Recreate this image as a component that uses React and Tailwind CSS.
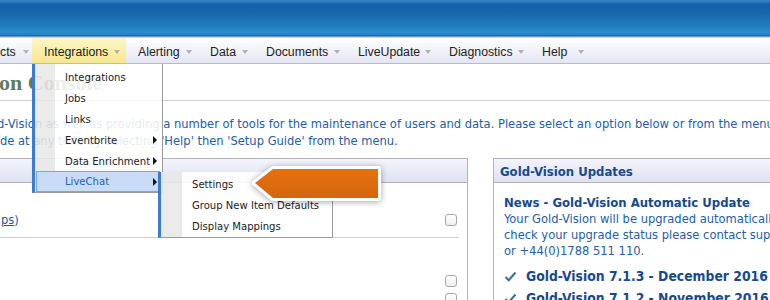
import React from 'react';

const navItems = [
  { label: 'Integrations', w: 'w-[94px]', active: true },
  { label: 'Alerting', w: 'w-[72px]' },
  { label: 'Data', w: 'w-[56px]' },
  { label: 'Documents', w: 'w-[92px]' },
  { label: 'LiveUpdate', w: 'w-[91px]' },
  { label: 'Diagnostics', w: 'w-[93px]' },
  { label: 'Help', w: 'w-[60px]' },
];

const menuItems = [
  { label: 'Integrations' },
  { label: 'Jobs' },
  { label: 'Links' },
  { label: 'Eventbrite', sub: true },
  { label: 'Data Enrichment', sub: true },
];

const DownArrow = () => (
  <svg width="6" height="4" viewBox="0 0 6 4" className="shrink-0">
    <path d="M0 0h6L3 4z" fill="#b0b0b8" />
  </svg>
);

const SubArrow = () => (
  <svg width="4" height="8" viewBox="0 0 4 8" className="shrink-0">
    <path d="M0 0l4 4-4 4z" fill="#111" />
  </svg>
);

const Check = () => (
  <svg width="13" height="11" viewBox="0 0 13 11" className="shrink-0">
    <path d="M1.5 6l3.2 3.2L11.5 1.5" fill="none" stroke="#2f6fa6" strokeWidth="2" />
  </svg>
);

const Checkbox = () => (
  <span className="block w-[12px] h-[12px] rounded-[3px] border border-[#a8a8a8] bg-gradient-to-b from-white to-[#eee]" />
);

export default function App() {
  return (
    <div className="relative w-[770px] h-[300px] overflow-hidden bg-white font-['DejaVu_Sans_Condensed','DejaVu_Sans',sans-serif]">
      {/* Top bar */}
      <div className="h-[38px] bg-[linear-gradient(to_bottom,#3d86c6_0px,#2d78bb_2px,#1461a6_4px,#1566aa_12px,#1f7dbe_26px,#2a8ccd_32px,#2580c2_35px,#0f5a98_36px,#cfd3dc_37px)]" />

      {/* Nav */}
      <nav className="h-[26px] flex bg-gradient-to-b from-white to-[#e4e5f3] border-b border-[#b9bac8] font-['Liberation_Sans',Arial,sans-serif] text-[12.3px] text-[#222]">
        <div className="w-[32px] flex items-center pr-[3px] pt-[3px]">
          <span>cts</span>
          <span className="ml-auto"><DownArrow /></span>
        </div>
        {navItems.map((n) => (
          <div
            key={n.label}
            className={`${n.w} shrink-0 flex items-center pt-[3px] pl-[12px] pr-[6px] ${n.active ? 'bg-gradient-to-b from-[#fdf7c8] to-[#f7e68a]' : ''}`}
          >
            <span>{n.label}</span>
            <span className="ml-auto"><DownArrow /></span>
          </div>
        ))}
      </nav>

      {/* Content */}
      <main>
        <div className="h-[37px] flex items-center pt-[1px] border-b border-[#cfcfcf]">
          <h1 className="-ml-[1px] font-['Liberation_Serif',serif] font-bold text-[22px] text-[#5d7d61] whitespace-nowrap">
            on Console
          </h1>
        </div>
        <div className="mt-[14px] text-[12.8px] leading-[17px] text-[#2160a8] whitespace-nowrap -ml-[3px]">
          <p>d-Vision as well as providing a number of tools for the maintenance of users and data. Please select an option below or from the menu</p>
          <p className="ml-[3px]">de at any time by selecting 'Help' then 'Setup Guide' from the menu.</p>
        </div>

        <div className="mt-[9px] flex gap-[25px]">
          {/* Left panel */}
          <section className="w-[470px] shrink-0 -ml-[2px] border border-[#b3b3b3] h-[160px]">
            <div className="h-[24px] bg-gradient-to-b from-[#f3f4fb] to-[#dfe1f2] border-b border-[#b3b3b3]" />
            <div className="mr-[8px] h-[55px] flex items-center justify-between pt-[19px] border-b border-[#cfcfcf] pl-[2px] text-[12.8px] text-[#1f5aa3]">
              <span><span className="underline">ps</span>)</span>
              <span className="mr-[2px]"><Checkbox /></span>
            </div>
            <div className="mr-[10px] flex flex-col items-end gap-[6px] pt-[37px]">
              <Checkbox />
              <Checkbox />
            </div>
          </section>

          {/* Right panel */}
          <section className="w-[300px] shrink-0 border border-[#b3b3b3] h-[160px]">
            <div className="h-[24px] flex items-center pt-[3px] pl-[6px] bg-gradient-to-b from-[#f3f4fb] to-[#dfe1f2] border-b border-[#b3b3b3] text-[13px] font-bold text-[#174a8c]">
              Gold-Vision Updates
            </div>
            <div className="pl-[10px] pt-[11px] whitespace-nowrap">
              <h2 className="text-[13px] leading-[17px] font-bold text-[#174a8c]">News - Gold-Vision Automatic Update</h2>
              <p className="text-[12.8px] leading-[16px] text-[#2160a8]">
                Your Gold-Vision will be upgraded automatically<br />
                check your upgrade status please contact support<br />
                or +44(0)1788 511 110.
              </p>
              <ul className="mt-[6px] text-[13.8px] leading-[22px] font-bold text-[#174a8c]">
                <li className="flex items-center gap-[9px]"><Check />Gold-Vision 7.1.3 - December 2016</li>
                <li className="flex items-center gap-[9px]"><Check />Gold-Vision 7.1.2 - November 2016</li>
              </ul>
            </div>
          </section>
        </div>
      </main>

      {/* Integrations dropdown */}
      <div className="absolute left-[32px] top-[64px] w-[131px] h-[129px] border-l-[3px] border-l-[#3a7bd5] border-r border-b border-r-[#9a9a9a] border-b-[#9a9a9a] bg-[linear-gradient(to_right,rgba(232,232,232,0.88)_20px,rgba(255,255,255,0.88)_20px)] pt-[2px] text-[11.2px] text-[#222] whitespace-nowrap">
        {menuItems.map((m) => (
          <div key={m.label} className="h-[21px] flex items-center pt-[3px] pl-[30px] pr-[5px]">
            <span>{m.label}</span>
            {m.sub && <span className="ml-auto -mt-[2px]"><SubArrow /></span>}
          </div>
        ))}
        <div className="ml-[1px] mr-[2px] h-[21px] flex items-center pt-[2px] pl-[28px] pr-[2px] border border-[#7ba4e2] bg-[#c8dcf6] text-[#2862b4]">
          <span>LiveChat</span>
          <span className="ml-auto -mt-[2px]"><SubArrow /></span>
        </div>
      </div>

      {/* LiveChat submenu */}
      <div className="absolute left-[158px] top-[172px] w-[175px] h-[66px] border-l-[3px] border-l-[#3a7bd5] border-r border-b border-r-[#9a9a9a] border-b-[#9a9a9a] bg-[linear-gradient(to_right,rgba(232,232,232,0.9)_21px,rgba(255,255,255,0.9)_21px)] pt-[1px] text-[11.2px] text-[#222] whitespace-nowrap">
        {['Settings', 'Group New Item Defaults', 'Display Mappings'].map((s) => (
          <div key={s} className="h-[21px] flex items-center pt-[3px] pl-[31px]">{s}</div>
        ))}
      </div>

      {/* Callout arrow */}
      <svg className="absolute left-[248px] top-[160px] drop-shadow-[0_1px_3px_rgba(0,0,0,0.35)]" width="138" height="46" viewBox="0 0 138 46">
        <defs>
          <linearGradient id="og" x1="0" y1="0" x2="0" y2="1">
            <stop offset="0" stopColor="#e4720f" />
            <stop offset="1" stopColor="#d6640e" />
          </linearGradient>
        </defs>
        <polygon points="7,23 25,9 130,9 130,38 25,38" fill="url(#og)" stroke="#fff" strokeWidth="6" strokeLinejoin="round" paintOrder="stroke" />
      </svg>
    </div>
  );
}
